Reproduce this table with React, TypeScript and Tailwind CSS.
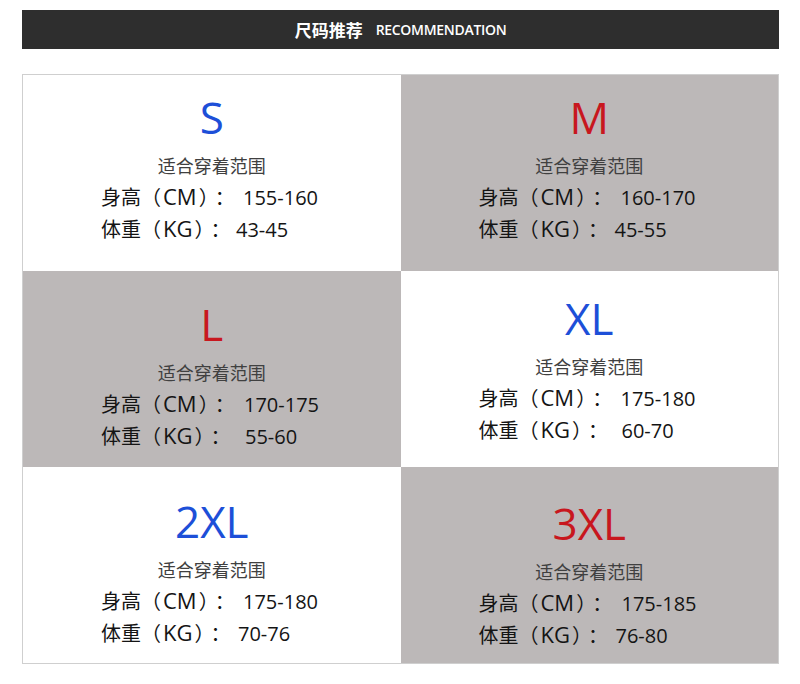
import React from "react";

type Cell = {
  size: string;
  color: string;
  bg: string;
  pt: string;
  cm: string;
  kg: string;
  cmW: string;
  kgW: string;
};

const cells: Cell[] = [
  { size: "S", color: "text-[#1d4fd8]", bg: "bg-white", pt: "pt-[20px]", cm: "155-160", kg: "43-45", cmW: "w-[142px]", kgW: "w-[135px]" },
  { size: "M", color: "text-[#c8171e]", bg: "bg-[#bcb8b8]", pt: "pt-[20px]", cm: "160-170", kg: "45-55", cmW: "w-[142px]", kgW: "w-[136px]" },
  { size: "L", color: "text-[#c8171e]", bg: "bg-[#bcb8b8]", pt: "pt-[31px]", cm: "170-175", kg: "55-60", cmW: "w-[143px]", kgW: "w-[144px]" },
  { size: "XL", color: "text-[#1d4fd8]", bg: "bg-white", pt: "pt-[25px]", cm: "175-180", kg: "60-70", cmW: "w-[142px]", kgW: "w-[143px]" },
  { size: "2XL", color: "text-[#1d4fd8]", bg: "bg-white", pt: "pt-[32px]", cm: "175-180", kg: "70-76", cmW: "w-[142px]", kgW: "w-[137px]" },
  { size: "3XL", color: "text-[#c8171e]", bg: "bg-[#bcb8b8]", pt: "pt-[34px]", cm: "175-185", kg: "76-80", cmW: "w-[143px]", kgW: "w-[137px]" },
];

const font = "font-['Open_Sans','Noto_Sans_CJK_SC',sans-serif]";

function Label({ cjk, latin }: { cjk: string; latin: string }) {
  return (
    <>
      {cjk}
      <span>（</span>
      <span className="text-[22px] px-[2px]">{latin}</span>
      <span>）</span>
      <span className="ml-[6px]">：</span>
    </>
  );
}

function SizeCell({ c }: { c: Cell }) {
  return (
    <div className={`${c.bg} ${c.pt} flex flex-col items-center`}>
      <div className={`${c.color} text-[44px] leading-none font-medium`}>{c.size}</div>
      <div className="mt-[17px] text-[18px] leading-[18px] text-[#404040] font-['Noto_Sans_CJK_SC',sans-serif]">
        适合穿着范围
      </div>
      <div className="mt-[7px] self-stretch pl-[78px] text-[20px] leading-[31px] text-[#141414]">
        <div className="flex items-baseline">
          <span className={`${c.cmW} shrink-0 whitespace-nowrap`}>
            <Label cjk="身高" latin="CM" />
          </span>
          <span>{c.cm}</span>
        </div>
        <div className="flex items-baseline">
          <span className={`${c.kgW} shrink-0 whitespace-nowrap`}>
            <Label cjk="体重" latin="KG" />
          </span>
          <span>{c.kg}</span>
        </div>
      </div>
    </div>
  );
}

export default function App() {
  return (
    <div className={`w-[800px] h-[684px] bg-white ${font} overflow-hidden`}>
      <div className="ml-[22px] w-[757px] pt-[10px]">
        <div className="h-[39px] bg-[#2e2e2e] flex items-center justify-center text-white">
          <span className="text-[17px] font-bold font-['Noto_Sans_CJK_SC',sans-serif] leading-none">尺码推荐</span>
          <span className="ml-[13px] text-[14px] font-semibold leading-none tracking-[-0.3px]">RECOMMENDATION</span>
        </div>
        <div className="mt-[25px] border border-[#cfcfcf] grid grid-cols-2 grid-rows-[196px_196px_196px]">
          {cells.map((c) => (
            <SizeCell key={c.size} c={c} />
          ))}
        </div>
      </div>
    </div>
  );
}
